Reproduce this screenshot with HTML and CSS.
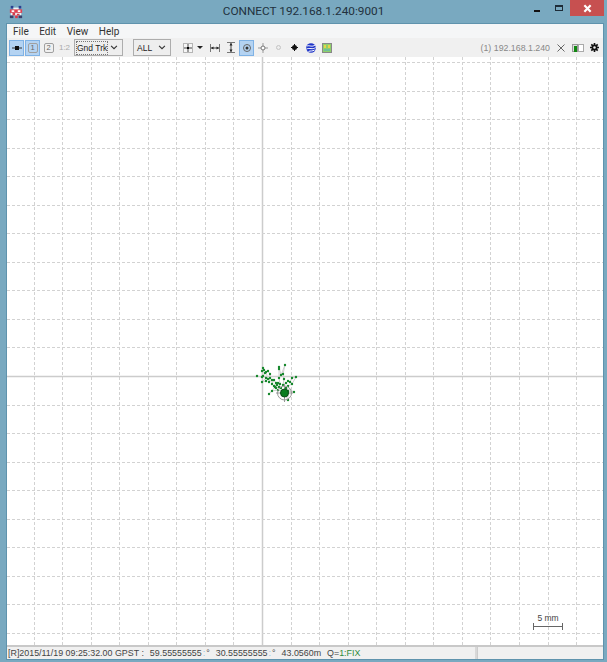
FILE: index.html
```html
<!DOCTYPE html>
<html>

<head>
    <meta charset="utf-8" />
    <title>CONNECT 192.168.1.240:9001</title>
    <link rel="stylesheet" href="styles.css">
</head>

<body>
    <div class="window">
        <div class="titlebar">
            <svg class="app-icon" width="14" height="14" viewBox="0 0 16 16">
                <rect x="2" y="1" width="3" height="3" fill="#2a3f8f" />
                <rect x="11" y="1" width="3" height="3" fill="#2a3f8f" />
                <rect x="5" y="3" width="6" height="3" fill="#eef2f6" />
                <rect x="1" y="5" width="14" height="4" fill="#e2404f" />
                <rect x="3" y="6" width="3" height="2" fill="#fff" />
                <rect x="10" y="6" width="3" height="2" fill="#fff" />
                <rect x="2" y="9" width="12" height="3" fill="#f2f2f2" />
                <rect x="4" y="9" width="3" height="3" fill="#d8394a" />
                <rect x="9" y="10" width="3" height="2" fill="#d8394a" />
                <rect x="1" y="12" width="4" height="3" fill="#3a3f6a" />
                <rect x="7" y="12" width="3" height="3" fill="#d8394a" />
                <rect x="11" y="12" width="4" height="3" fill="#3a3f6a" />
            </svg>
            <div class="title">CONNECT 192.168.1.240:9001</div>
            <div class="win-btns">
                <div class="win-btn"><span class="min-glyph"></span></div>
                <div class="win-btn"><span class="max-glyph"></span></div>
                <div class="close-btn">
                    <svg width="9" height="9" viewBox="0 0 10 10">
                        <path d="M1.5 1.5L8.5 8.5M8.5 1.5L1.5 8.5" stroke="#fff" stroke-width="2.4" />
                    </svg>
                </div>
            </div>
        </div>

        <div class="client">
            <div class="menubar">
                <span>File</span>
                <span>Edit</span>
                <span>View</span>
                <span>Help</span>
            </div>

            <div class="toolbar">
                <div class="tool active">
                    <svg width="10" height="6" viewBox="0 0 10 6">
                        <path d="M0 3H10" stroke="#333" />
                        <rect x="3" y="1" width="4" height="4" fill="#111" />
                    </svg>
                </div>
                <div class="tool active">
                    <span class="num-box">1</span>
                </div>
                <div class="tool">
                    <span class="num-box">2</span>
                </div>
                <div class="tool dim">1:2</div>
                <div class="combo combo-trk"><span class="combo-val selected">Gnd Trk</span><svg width="8" height="5" viewBox="0 0 9 6"><path d="M1 1L4.5 4.5L8 1" fill="none" stroke="#333" stroke-width="1.3" /></svg></div>
                <div class="combo combo-all"><span class="combo-val">ALL</span><svg width="8" height="5" viewBox="0 0 9 6"><path d="M1 1L4.5 4.5L8 1" fill="none" stroke="#333" stroke-width="1.3" /></svg></div>

                <div class="tool">
                    <svg width="10" height="10" viewBox="0 0 10 10">
                        <rect x="0.5" y="0.5" width="9" height="9" fill="#f6f6f6" stroke="#b5b5b5" />
                        <path d="M5 1V9M1 5H9" stroke="#444" />
                        <rect x="4" y="4" width="2" height="2" fill="#000" />
                    </svg>
                </div>
                <div class="drop-arrow"></div>
                <div class="tool">
                    <svg width="10" height="8" viewBox="0 0 10 8">
                        <path d="M0.5 0V8M9.5 0V8" stroke="#777" />
                        <path d="M1 4H9" stroke="#444" />
                        <path d="M1 4L3.5 2.5V5.5ZM9 4L6.5 2.5V5.5Z" fill="#222" />
                    </svg>
                </div>
                <div class="tool">
                    <svg width="8" height="11" viewBox="0 0 8 11">
                        <path d="M0 0.5H8M0 10.5H8" stroke="#777" />
                        <path d="M4 1V10" stroke="#444" />
                        <path d="M4 1L2.5 3.5H5.5ZM4 10L2.5 7.5H5.5Z" fill="#222" />
                    </svg>
                </div>
                <div class="tool active">
                    <svg width="8" height="8" viewBox="0 0 8 8">
                        <circle cx="4" cy="4" r="3.5" fill="none" stroke="#666" />
                        <circle cx="4" cy="4" r="1.5" fill="#333" />
                    </svg>
                </div>
                <div class="tool">
                    <svg width="10" height="10" viewBox="0 0 10 10">
                        <path d="M5 0V10M0 5H10" stroke="#999" />
                        <circle cx="5" cy="5" r="2" fill="#fff" stroke="#777" />
                    </svg>
                </div>
                <div class="tool">
                    <svg width="5" height="5" viewBox="0 0 5 5">
                        <circle cx="2.5" cy="2.5" r="2" fill="#eee" stroke="#c4c4c4" />
                    </svg>
                </div>
                <div class="tool">
                    <svg width="7" height="7" viewBox="0 0 7 7">
                        <path d="M3.5 0V7M0 3.5H7" stroke="#111" />
                        <circle cx="3.5" cy="3.5" r="2.5" fill="#111" />
                    </svg>
                </div>
                <div class="tool">
                    <svg width="10" height="10" viewBox="0 0 10 10">
                        <circle cx="5" cy="5" r="4.8" fill="#1f35c8" />
                        <path d="M1 3C3.5 2 6 4.5 9 2M0.5 6C3.5 4.5 6.5 7 9.5 4.5M2.5 8.5C4.5 7.5 6.5 8.5 8.5 7" fill="none" stroke="#fff" />
                    </svg>
                </div>
                <div class="tool">
                    <svg width="10" height="10" viewBox="0 0 10 10">
                        <rect x="0.5" y="0.5" width="9" height="9" fill="#8fd06a" stroke="#888" />
                        <rect x="2" y="2" width="2" height="3" fill="#e6d34a" />
                        <rect x="6" y="2" width="2" height="3" fill="#e6d34a" />
                        <rect x="2" y="6" width="6" height="2" fill="#6fbf9a" />
                    </svg>
                </div>

                <div class="tool-spacer"></div>
                <div class="server">(1) 192.168.1.240</div>
                <svg class="stop-icon" width="8" height="8" viewBox="0 0 8 8">
                    <path d="M0.5 0.5L7.5 7.5M7.5 0.5L0.5 7.5" stroke="#666" />
                </svg>
                <svg class="level-icon" width="12" height="8" viewBox="0 0 12 8">
                    <rect x="0.5" y="0.5" width="5" height="7" fill="#ddd" stroke="#999" />
                    <rect x="2" y="2" width="3" height="6" fill="#118811" />
                    <rect x="6.5" y="0.5" width="5" height="7" fill="#fff" stroke="#aaa" />
                </svg>
                <svg class="gear-icon" width="9" height="9" viewBox="0 0 11 11">
                    <path d="M5.5 0V11M0 5.5H11M1.6 1.6L9.4 9.4M9.4 1.6L1.6 9.4" stroke="#111" stroke-width="2" />
                    <circle cx="5.5" cy="5.5" r="3.6" fill="#111" />
                    <circle cx="5.5" cy="5.5" r="1.5" fill="#f0f0f0" />
                </svg>
            </div>

            <div class="plot">
                <svg id="plot" width="596" height="588" viewBox="7 57 596 588"></svg>
                <div class="scale">
                    <span class="scale-label">5 mm</span>
                    <span class="scale-bar"></span>
                </div>
            </div>

            <div class="statusbar">
                <div class="status-main">
                    <span>[R]2015/11/19 09:25:32.00 GPST :</span>
                    <span>59.55555555<span class="faint">:</span>°</span>
                    <span>30.55555555<span class="faint">:</span>°</span>
                    <span>43.0560m</span>
                    <span>Q=<span class="fix">1:FIX</span></span>
                </div>
                <div class="status-end"></div>
            </div>
        </div>
    </div>

    <script type="text/javascript">
        var svg = document.getElementById("plot");
        var step = 28.55;
        var cx = 262;
        var cy = 376;
        var html = "";

        function line(x1, y1, x2, y2, cls) {
            return '<line x1="' + x1 + '" y1="' + y1 + '" x2="' + x2 + '" y2="' + y2 + '" class="' + cls + '"/>';
        }

        // grid, centre lines are solid
        for (var i = -8; i <= 11; i++) {
            var x = Math.round(cx + i * step) + 0.5;
            html += line(x, 57, x, 645, i == 0 ? "axis" : "grid");
        }
        for (var j = -11; j <= 9; j++) {
            var y = Math.round(cy + j * step) + 0.5;
            html += line(7, y, 603, y, j == 0 ? "axis" : "grid");
        }

        // solution points, oldest first
        var pts = [
            [257, 376], [262, 377], [263, 368], [264, 370], [262, 371], [265, 373], [263, 376], [266, 378],
            [262, 382], [266, 381], [268, 379], [266, 372], [268, 371], [270, 374], [270, 378], [269, 382],
            [272, 380], [272, 384], [274, 380], [276, 383], [274, 386], [277, 385], [276, 388], [279, 387],
            [280, 384], [279, 378], [279, 369], [279, 367], [281, 375], [285, 365], [283, 374], [284, 379],
            [283, 385], [286, 383], [288, 381], [290, 382], [292, 378], [296, 377], [292, 384], [288, 386],
            [286, 388], [294, 392], [288, 391], [288, 400], [282, 391], [278, 390], [272, 391], [269, 394],
            [275, 387], [278, 383], [281, 388]
        ];
        for (var k = 1; k < pts.length; k++) {
            html += line(pts[k - 1][0], pts[k - 1][1], pts[k][0], pts[k][1], "track");
        }
        for (var n = 0; n < pts.length; n++) {
            html += '<circle cx="' + pts[n][0] + '" cy="' + pts[n][1] + '" r="1.2" class="point"/>';
        }

        // current position marker
        html += '<circle cx="284.5" cy="393" r="7" class="mark-ring"/>';
        html += line(284.5, 384, 284.5, 402, "mark-cross");
        html += line(276, 393, 293, 393, "mark-cross");
        html += '<circle cx="284.5" cy="393" r="4" class="mark-dot"/>';
        svg.innerHTML = html;
    </script>
</body>

</html>
```
FILE: styles.css
```css
html,
body {
    margin: 0;
    height: 100%;
    overflow: hidden;
}

body {
    font-family: "Liberation Sans", Arial, sans-serif;
    font-size: 10px;
    color: #333;
}

.window {
    display: flex;
    flex-direction: column;
    width: 607px;
    height: 662px;
    padding: 0 4px 3px 7px;
    background-color: #79a9c0;
    box-sizing: border-box;
}

.titlebar {
    position: relative;
    display: flex;
    flex: none;
    height: 24px;
    margin-right: -4px;
    margin-left: -7px;
    align-items: flex-start;
    justify-content: center;
}

.app-icon {
    position: absolute;
    top: 5px;
    left: 9px;
}

.title {
    font-family: Roboto, sans-serif;
    font-size: 11.8px;
    line-height: 23px;
    color: #22313d;
}

.win-btns {
    position: absolute;
    top: 0;
    right: 3px;
    display: flex;
}

.win-btn {
    display: flex;
    width: 22px;
    height: 16px;
    align-items: center;
    justify-content: center;
}

.min-glyph {
    width: 6px;
    height: 2px;
    margin-top: 5px;
    background-color: #111;
}

.max-glyph {
    width: 6px;
    height: 3px;
    border: 1px solid #1d2c38;
    border-top-width: 2px;
}

.close-btn {
    display: flex;
    width: 34px;
    height: 16px;
    align-items: center;
    justify-content: center;
    background-color: #c75050;
}

.client {
    display: flex;
    flex: 1;
    flex-direction: column;
    min-height: 0;
    background-color: #fff;
    box-shadow: 0 0 0 1px #5f93ad;
}

.menubar {
    display: flex;
    flex: none;
    height: 14px;
    padding: 0 6px;
    gap: 10.5px;
    align-items: center;
    font-family: Roboto, sans-serif;
    background-color: #f5f6f7;
}

.toolbar {
    display: flex;
    flex: none;
    height: 19px;
    padding-left: 2px;
    align-items: center;
    background-color: #f0f0f0;
}

.tool {
    display: flex;
    flex: none;
    width: 13px;
    height: 14px;
    margin-right: 1px;
    align-items: center;
    justify-content: center;
    border: 1px solid transparent;
}

.tool.active {
    background-color: #b4d3f2;
    border-color: #7fb2e5;
}

.tool.dim {
    font-size: 8px;
    color: #aaa;
}

.num-box {
    display: block;
    width: 8px;
    height: 8px;
    font-size: 7.5px;
    line-height: 8px;
    text-align: center;
    color: #666;
    border: 1px solid #a0a0a0;
    border-radius: 2px;
}

.combo {
    display: flex;
    flex: none;
    height: 17px;
    padding: 0 4px 0 2px;
    align-items: center;
    justify-content: space-between;
    font-size: 8.5px;
    line-height: 12px;
    white-space: nowrap;
    color: #222;
    background-color: #eee;
    border: 1px solid #adadad;
    box-sizing: border-box;
}

.combo-trk {
    width: 49px;
    margin-left: 1px;
}

.combo-all {
    width: 38px;
    margin-right: 9px;
    margin-left: 10px;
    padding-left: 3px;
}

.combo-val.selected {
    outline: 1px dotted #777;
}

.drop-arrow {
    flex: none;
    width: 0;
    height: 0;
    margin: 0 4px 0 1px;
    border-top: 3px solid #222;
    border-right: 3px solid transparent;
    border-left: 3px solid transparent;
}

.tool-spacer {
    flex: 1;
}

.server {
    margin-right: 7px;
    font-size: 8.8px;
    color: #888;
}

.stop-icon {
    margin-right: 7px;
}

.level-icon {
    margin-right: 6px;
}

.gear-icon {
    margin-right: 4px;
}

.plot {
    position: relative;
    flex: none;
    height: 588px;
    overflow: hidden;
    background-color: #fff;
}

#plot {
    display: block;
}

.grid {
    stroke: #d2d2d2;
    stroke-width: 1;
    stroke-dasharray: 3 2;
}

.axis {
    stroke: #cccccc;
    stroke-width: 1.5;
}

.track {
    stroke: #d0d0d0;
    stroke-width: 1;
}

.point {
    fill: #14872a;
}

.mark-ring {
    fill: none;
    stroke: #999;
}

.mark-cross {
    stroke: #999;
}

.mark-dot {
    fill: #0a7d1f;
    stroke: #0c4a18;
}

.scale {
    position: absolute;
    right: 40px;
    bottom: 15px;
    display: flex;
    flex-direction: column;
    width: 30px;
    align-items: center;
}

.scale-label {
    font-size: 8.5px;
    line-height: 10px;
    color: #444;
}

.scale-bar {
    width: 100%;
    height: 7px;
    background: linear-gradient(#666, #666) center / 100% 1px no-repeat;
    border-right: 1px solid #666;
    border-left: 1px solid #666;
    box-sizing: border-box;
}

.statusbar {
    display: flex;
    flex: none;
    height: 14px;
    background-color: #f0f0f0;
    border-top: 2px solid #c8c8c8;
    box-sizing: border-box;
}

.status-main {
    display: flex;
    flex: 1;
    padding-left: 1px;
    gap: 6px;
    font-size: 8.9px;
    line-height: 12px;
    color: #444;
    white-space: nowrap;
    border-right: 2px solid #d8d8d8;
}

.status-end {
    flex: none;
    width: 125px;
    border-left: 1px solid #ccc;
}

.faint {
    margin: 0 1px;
    color: #8fc4e8;
}

.fix {
    color: #2f8a3a;
}
```
